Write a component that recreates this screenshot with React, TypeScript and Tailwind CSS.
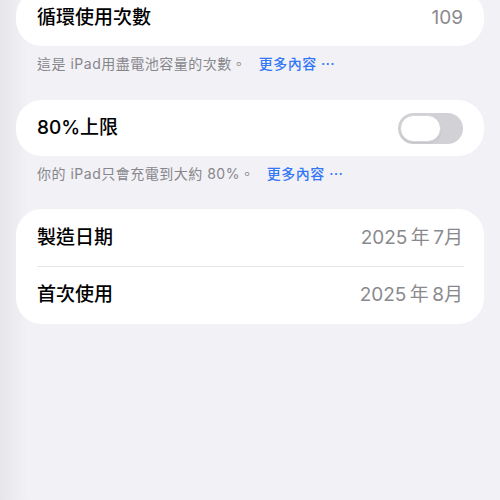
import React from 'react';

const font = { fontFamily: '"Inter", "Noto Sans CJK TC", sans-serif' };

const Row: React.FC<{ label: string; value?: string; children?: React.ReactNode }> = ({ label, value, children }) => (
  <div className="flex items-center justify-between h-[56px] px-[21px]">
    <span className="text-[19px] font-medium text-black">{label}</span>
    {value && <span className="text-[19px] text-[#8a8a8e]">{value}</span>}
    {children}
  </div>
);

const Caption: React.FC<{ text: string }> = ({ text }) => (
  <p className="px-[37px] pt-[8px] text-[14px] leading-[20px] tracking-[0.5px] text-[#86868b]">
    {text} <span className="ml-[8px] text-[#3478f6] font-medium">更多內容 ⋯</span>
  </p>
);

const Toggle: React.FC = () => (
  <div className="w-[65px] h-[31px] rounded-full bg-[#d1d1d6] p-[2px] flex items-center">
    <div className="w-[41px] h-[27px] rounded-full bg-white border border-[#d6d6d8] shadow-[0_1px_2px_rgba(0,0,0,0.08)]"></div>
  </div>
);

export default function App() {
  return (
    <div
      className="w-[500px] h-[500px] overflow-hidden bg-[linear-gradient(to_right,#e7e6eb,#f2f1f6_28px)]"
      style={font}
    >
      <div className="mx-4 -mt-[10px] bg-white rounded-[26px]">
        <Row label="循環使用次數" value="109" />
      </div>
      <Caption text="這是 iPad用盡電池容量的次數。" />

      <div className="mx-4 mt-[26px] bg-white rounded-[26px]">
        <Row label="80%上限">
          <Toggle />
        </Row>
      </div>
      <Caption text="你的 iPad只會充電到大約 80%。" />

      <div className="mx-4 mt-[25px] bg-white rounded-[26px] py-px">
        <Row label="製造日期" value={'2025\u2009年\u20097月'} />
        <div className="ml-[21px] mr-[20px] h-px bg-[#e5e5ea]"></div>
        <Row label="首次使用" value={'2025\u2009年\u20098月'} />
      </div>
    </div>
  );
}
